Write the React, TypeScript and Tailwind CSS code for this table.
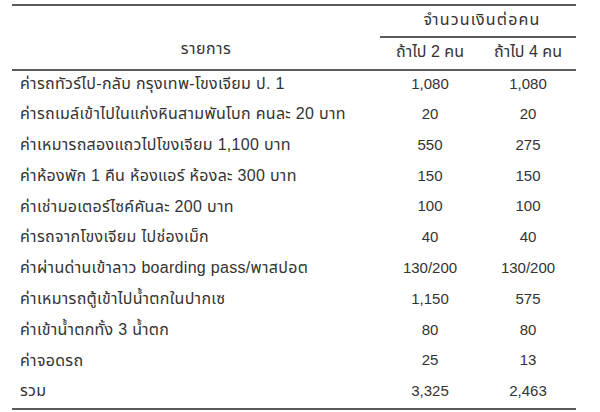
const rows: [string, string, string][] = [
  ["ค่ารถทัวร์ไป-กลับ กรุงเทพ-โขงเจียม ป. 1", "1,080", "1,080"],
  ["ค่ารถเมล์เข้าไปในแก่งหินสามพันโบก คนละ 20 บาท", "20", "20"],
  ["ค่าเหมารถสองแถวไปโขงเจียม 1,100 บาท", "550", "275"],
  ["ค่าห้องพัก 1 คืน ห้องแอร์ ห้องละ 300 บาท", "150", "150"],
  ["ค่าเช่ามอเตอร์ไซค์คันละ 200 บาท", "100", "100"],
  ["ค่ารถจากโขงเจียม ไปช่องเม็ก", "40", "40"],
  ["ค่าผ่านด่านเข้าลาว boarding pass/พาสปอต", "130/200", "130/200"],
  ["ค่าเหมารถตู้เข้าไปน้ำตกในปากเซ", "1,150", "575"],
  ["ค่าเข้าน้ำตกทั้ง 3 น้ำตก", "80", "80"],
  ["ค่าจอดรถ", "25", "13"],
  ["รวม", "3,325", "2,463"],
];

export default function App() {
  return (
    <div className="w-[600px] h-[412px] bg-white pt-[4px] pl-[12px] text-[#333] text-[15px] font-['Liberation_Sans','Noto_Sans_Thai','Tahoma',sans-serif]">
      <table className="w-[564px] table-fixed border-collapse">
        <colgroup>
          <col className="w-[368px]" />
          <col className="w-[100px]" />
          <col className="w-[96px]" />
        </colgroup>
        <thead>
          <tr className="border-t-2 border-[#5a5a5a] h-[32px]">
            <th rowSpan={2} className="font-normal text-center align-bottom pb-[8px] pl-[20px] text-[16px] tracking-[0.5px]">
              รายการ
            </th>
            <th colSpan={2} className="font-normal text-center border-b-2 border-[#5a5a5a] pb-[3px] text-[16px] tracking-[1.2px] pl-[8px]">
              จำนวนเงินต่อคน
            </th>
          </tr>
          <tr className="h-[33px] border-b-2 border-[#5a5a5a]">
            <th className="font-normal text-center pb-[3px] text-[16px]">ถ้าไป 2 คน</th>
            <th className="font-normal text-center pb-[3px] text-[16px]">ถ้าไป 4 คน</th>
          </tr>
        </thead>
        <tbody className="border-b-2 border-[#5a5a5a]">
          {rows.map(([label, two, four]) => (
            <tr key={label} className="h-[30.8px]">
              <td className="pl-[8px] pb-[4px] whitespace-nowrap text-[16px] tracking-[0.3px]">{label}</td>
              <td className="text-center pb-[4px]">{two}</td>
              <td className="text-center pb-[4px]">{four}</td>
            </tr>
          ))}
        </tbody>
      </table>
    </div>
  );
}
